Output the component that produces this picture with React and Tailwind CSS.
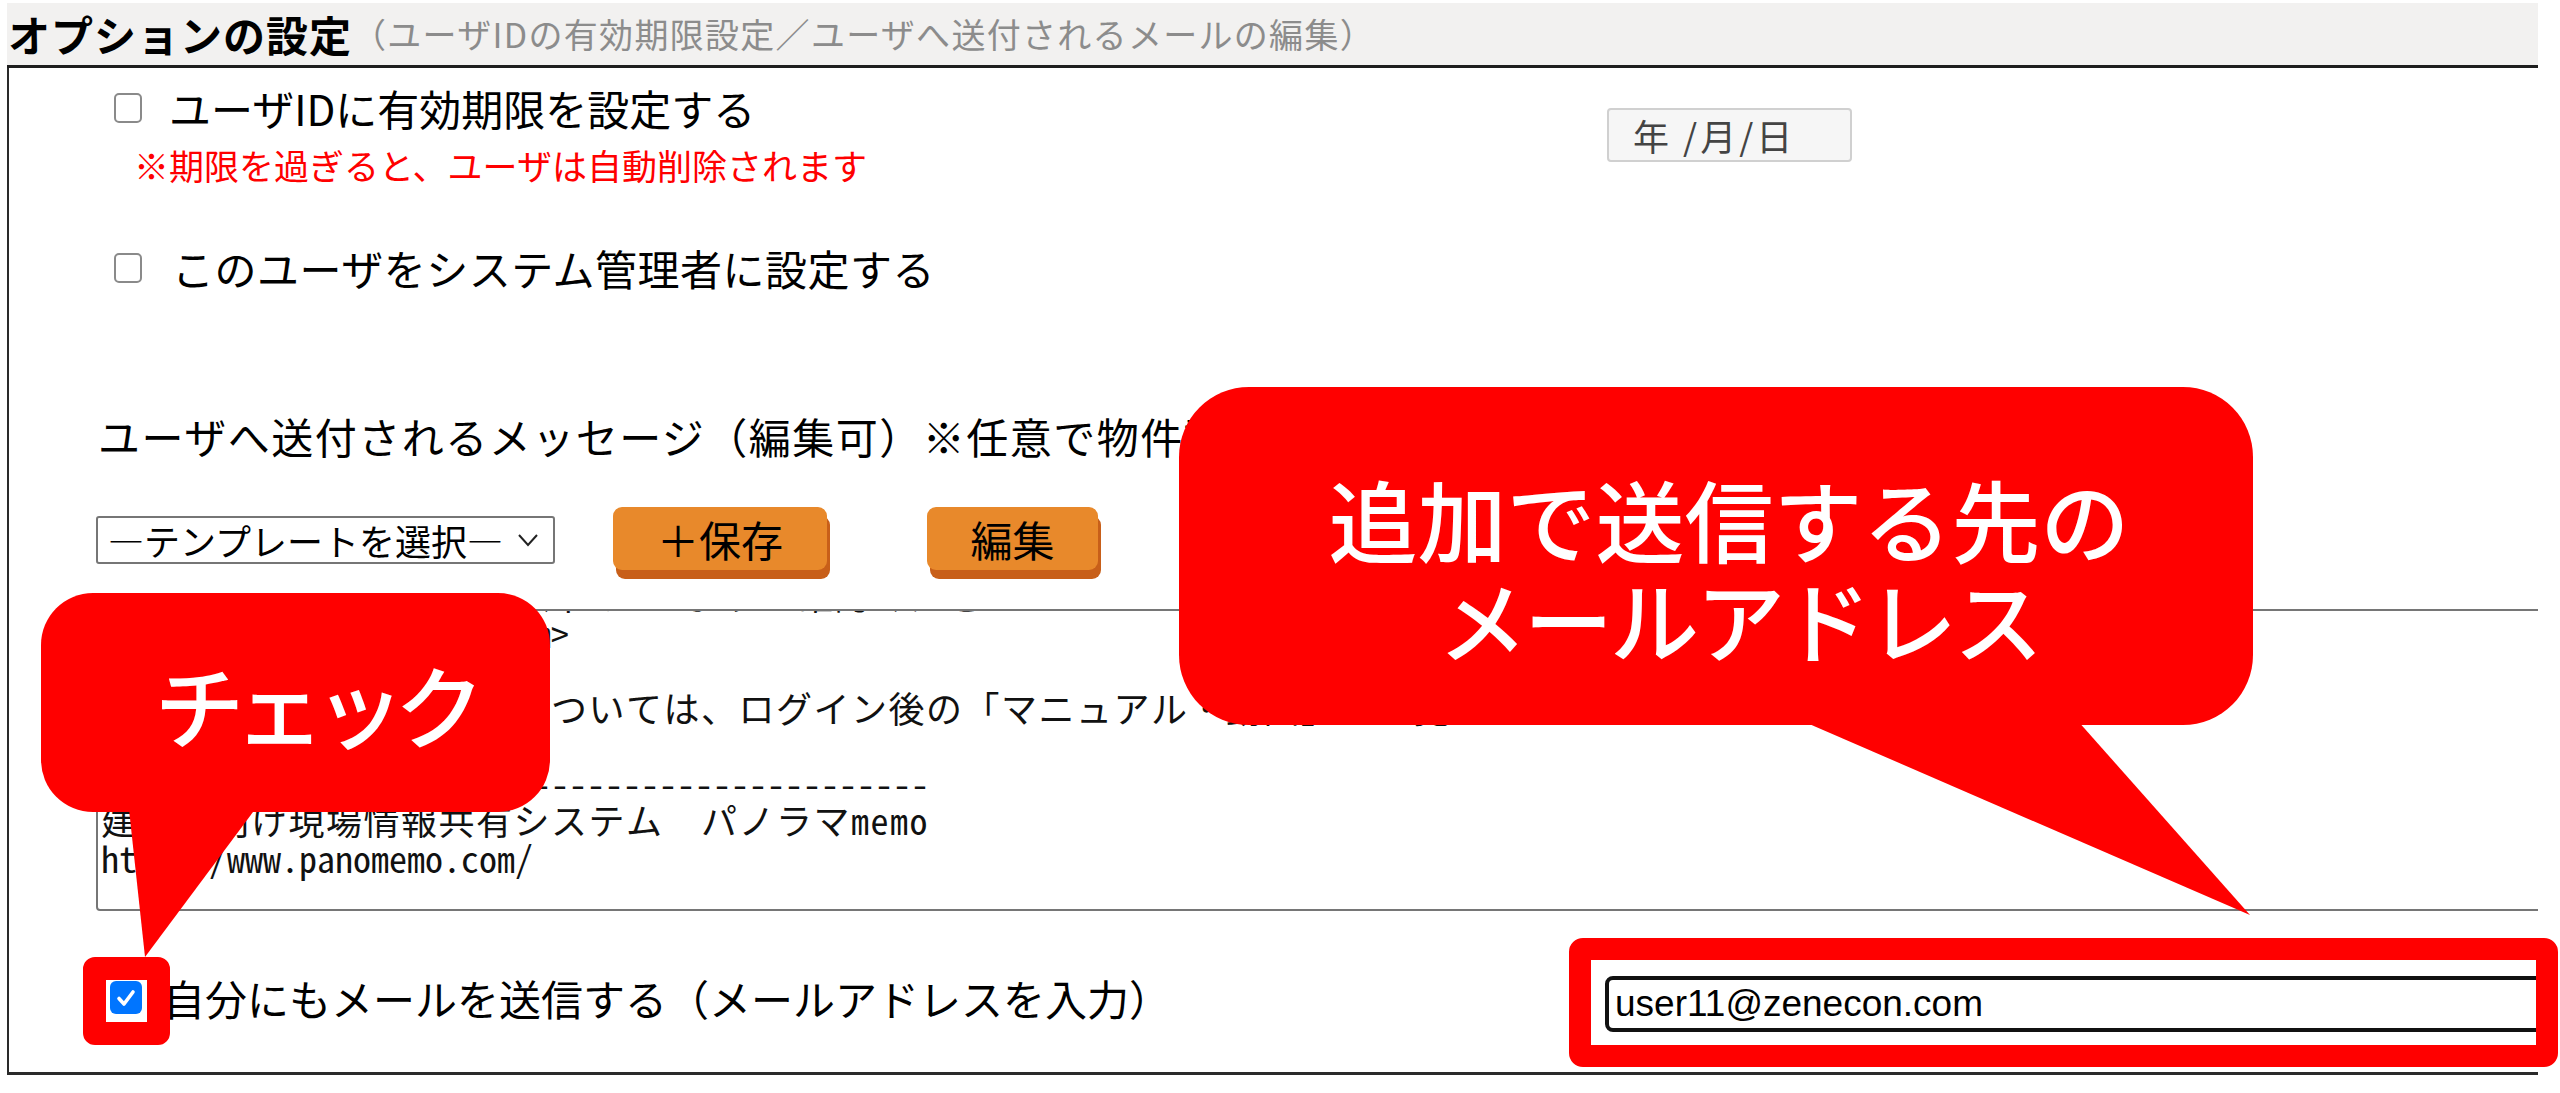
import React from "react";

function Box({ checked }) {
  if (checked) {
    return (
      <div className="w-[32px] h-[33px] rounded-[6px] bg-[#0075ff] flex items-center justify-center shrink-0">
        <svg width="22" height="22" viewBox="0 0 22 22">
          <path d="M4 11.5 L9 17 L18 5" fill="none" stroke="#fff" strokeWidth="3.6" strokeLinecap="round" strokeLinejoin="round" />
        </svg>
      </div>
    );
  }
  return <div className="w-[28px] h-[30px] rounded-[5px] border-2 border-[#8a8a8a] bg-white shrink-0" />;
}

const lines = [
  ["物件の詳細については、以下のURLよりご確認ください", true],
  ["<https://www.panomemo.com>", false],
  [" ", false],
  ["本システムの詳しい操作については、ログイン後の「マニュアル・動画」をご覧ください。", true],
  [" ", false],
  ["----------------------------------------------", false],
  ["建設業向け現場情報共有システム　パノラマmemo", true],
  ["http://www.panomemo.com/", false],
  [" ", false],
];

export default function App() {
  return (
    <div className="relative w-[2560px] h-[1093px] bg-white overflow-hidden font-['Noto_Sans_CJK_JP',sans-serif] text-black">
      {/* page */}
      <div className="ml-[7px] w-[2531px] pt-[3px] overflow-hidden">
        {/* header */}
        <div className="h-[65px] bg-[#f2f1f0] border-b-[3px] border-[#1e1e1e] flex items-center pl-[1px]">
          <span className="text-[42px] font-bold leading-none tracking-[1px]">オプションの設定</span>
          <span className="text-[34px] leading-none text-[#8c8c8c] tracking-[1.3px]">（ユーザIDの有効期限設定／ユーザへ送付されるメールの編集）</span>
        </div>

        {/* box */}
        <div className="border-l-2 border-b-[3px] border-[#2a2a2a] h-[1007px]">
          <div className="h-[80px] flex items-center pl-[105px]">
            <Box />
            <span className="ml-[27px] w-[1438px] shrink-0 text-[42px] leading-none">ユーザIDに有効期限を設定する</span>
            <div className="self-start mt-[40px] w-[245px] h-[54px] shrink-0 rounded-[4px] border-2 border-[#d0d0d0] bg-[#f6f6f6] flex items-center pl-[24px] text-[36px] tracking-[3px] text-[#444] leading-none">
              年 /月/日
            </div>
          </div>
          <div className="h-[34px] pl-[125px] text-[35px] leading-[34px] text-[#ff0000]">※期限を過ぎると、ユーザは自動削除されます</div>

          <div className="mt-[56px] h-[60px] flex items-center pl-[105px]">
            <Box />
            <span className="ml-[30px] text-[42px] leading-none tracking-[0.5px]">このユーザをシステム管理者に設定する</span>
          </div>

          <div className="mt-[113px] h-[50px] pl-[89px] flex items-center text-[42px] leading-none tracking-[1.5px] whitespace-nowrap">
            ユーザへ送付されるメッセージ（編集可）※任意で物件説明などを追記してください
          </div>

          <div className="mt-[46px] h-[73px] flex items-start pl-[87px]">
            <div className="mt-[9px] w-[459px] h-[48px] shrink-0 border-2 border-[#767676] rounded-[3px] flex items-center pl-[10px] pr-[14px] bg-white">
              <span className="text-[36px] leading-none flex-1 whitespace-nowrap">―テンプレートを選択―</span>
              <svg width="22" height="14" viewBox="0 0 22 14">
                <polyline points="2,2 11,12 20,2" fill="none" stroke="#222" strokeWidth="2" />
              </svg>
            </div>
            <button className="ml-[58px] w-[214px] h-[63px] shrink-0 rounded-[9px] bg-[#e8892b] shadow-[3px_9px_0_#c85f19] text-[42px] leading-none flex items-center justify-center">
              ＋保存
            </button>
            <button className="ml-[100px] w-[171px] h-[63px] shrink-0 rounded-[9px] bg-[#e8892b] shadow-[3px_9px_0_#c85f19] text-[42px] leading-none flex items-center justify-center">
              編集
            </button>
          </div>

          {/* message area (scrolled) */}
          <div className="mt-[29px] ml-[87px] w-[2460px] h-[302px] border-2 border-[#767676] rounded-l-[4px] overflow-hidden">
            <div className="-mt-[35px] pl-[3px] font-['Noto_Sans_Mono_CJK_JP','Noto_Sans_CJK_JP',monospace] text-[36px] leading-[37.5px] whitespace-pre text-[#111]">
              {lines.map(([line, wide], i) => (
                <div key={i} className={wide ? "tracking-[1.5px]" : ""}>{line}</div>
              ))}
            </div>
          </div>

          <div className="h-[161px] pt-[12px] flex items-center pl-[101px]">
            <Box checked />
            <span className="ml-[21px] w-[1442px] shrink-0 text-[42px] leading-none">自分にもメールを送信する（メールアドレスを入力）</span>
            <div className="w-[1000px] h-[56px] border-[4px] border-[#111] rounded-l-[8px] flex items-center pl-[6px] bg-white shrink-0 mt-[12px]">
              <span className="font-['Liberation_Sans',Arial,sans-serif] text-[37px] leading-none">user11@zenecon.com</span>
            </div>
          </div>
        </div>
      </div>

      {/* annotations */}
      <svg className="absolute left-0 top-0 pointer-events-none" width="2560" height="1093">
        <polygon points="1800,720 2077,720 2250,915" fill="#ff0000" />
        <polygon points="128,800 262,800 145,957" fill="#ff0000" />
      </svg>

      <div className="absolute left-[1179px] top-[387px] w-[1074px] h-[338px] rounded-[70px] bg-[#ff0000] flex flex-col items-center justify-center pt-[24px] text-white font-medium">
        <div className="text-[89px] leading-[100px] pl-[26px] whitespace-nowrap">追加で送信する先の</div>
        <div className="text-[89px] leading-[100px] pl-[46px] tracking-[-3px] whitespace-nowrap">メールアドレス</div>
      </div>

      <div className="absolute left-[41px] top-[593px] w-[509px] h-[219px] rounded-[52px] bg-[#ff0000] flex items-center justify-center pl-[38px] text-white">
        <span className="text-[90px] leading-none font-medium tracking-[-10px] whitespace-nowrap">チェック</span>
      </div>

      <div className="absolute left-[83px] top-[957px] w-[87px] h-[88px] rounded-[12px] border-[23px] border-[#ff0000]" />
      <div className="absolute left-[1569px] top-[938px] w-[989px] h-[129px] rounded-[14px] border-[22px] border-[#ff0000]" />
    </div>
  );
}
